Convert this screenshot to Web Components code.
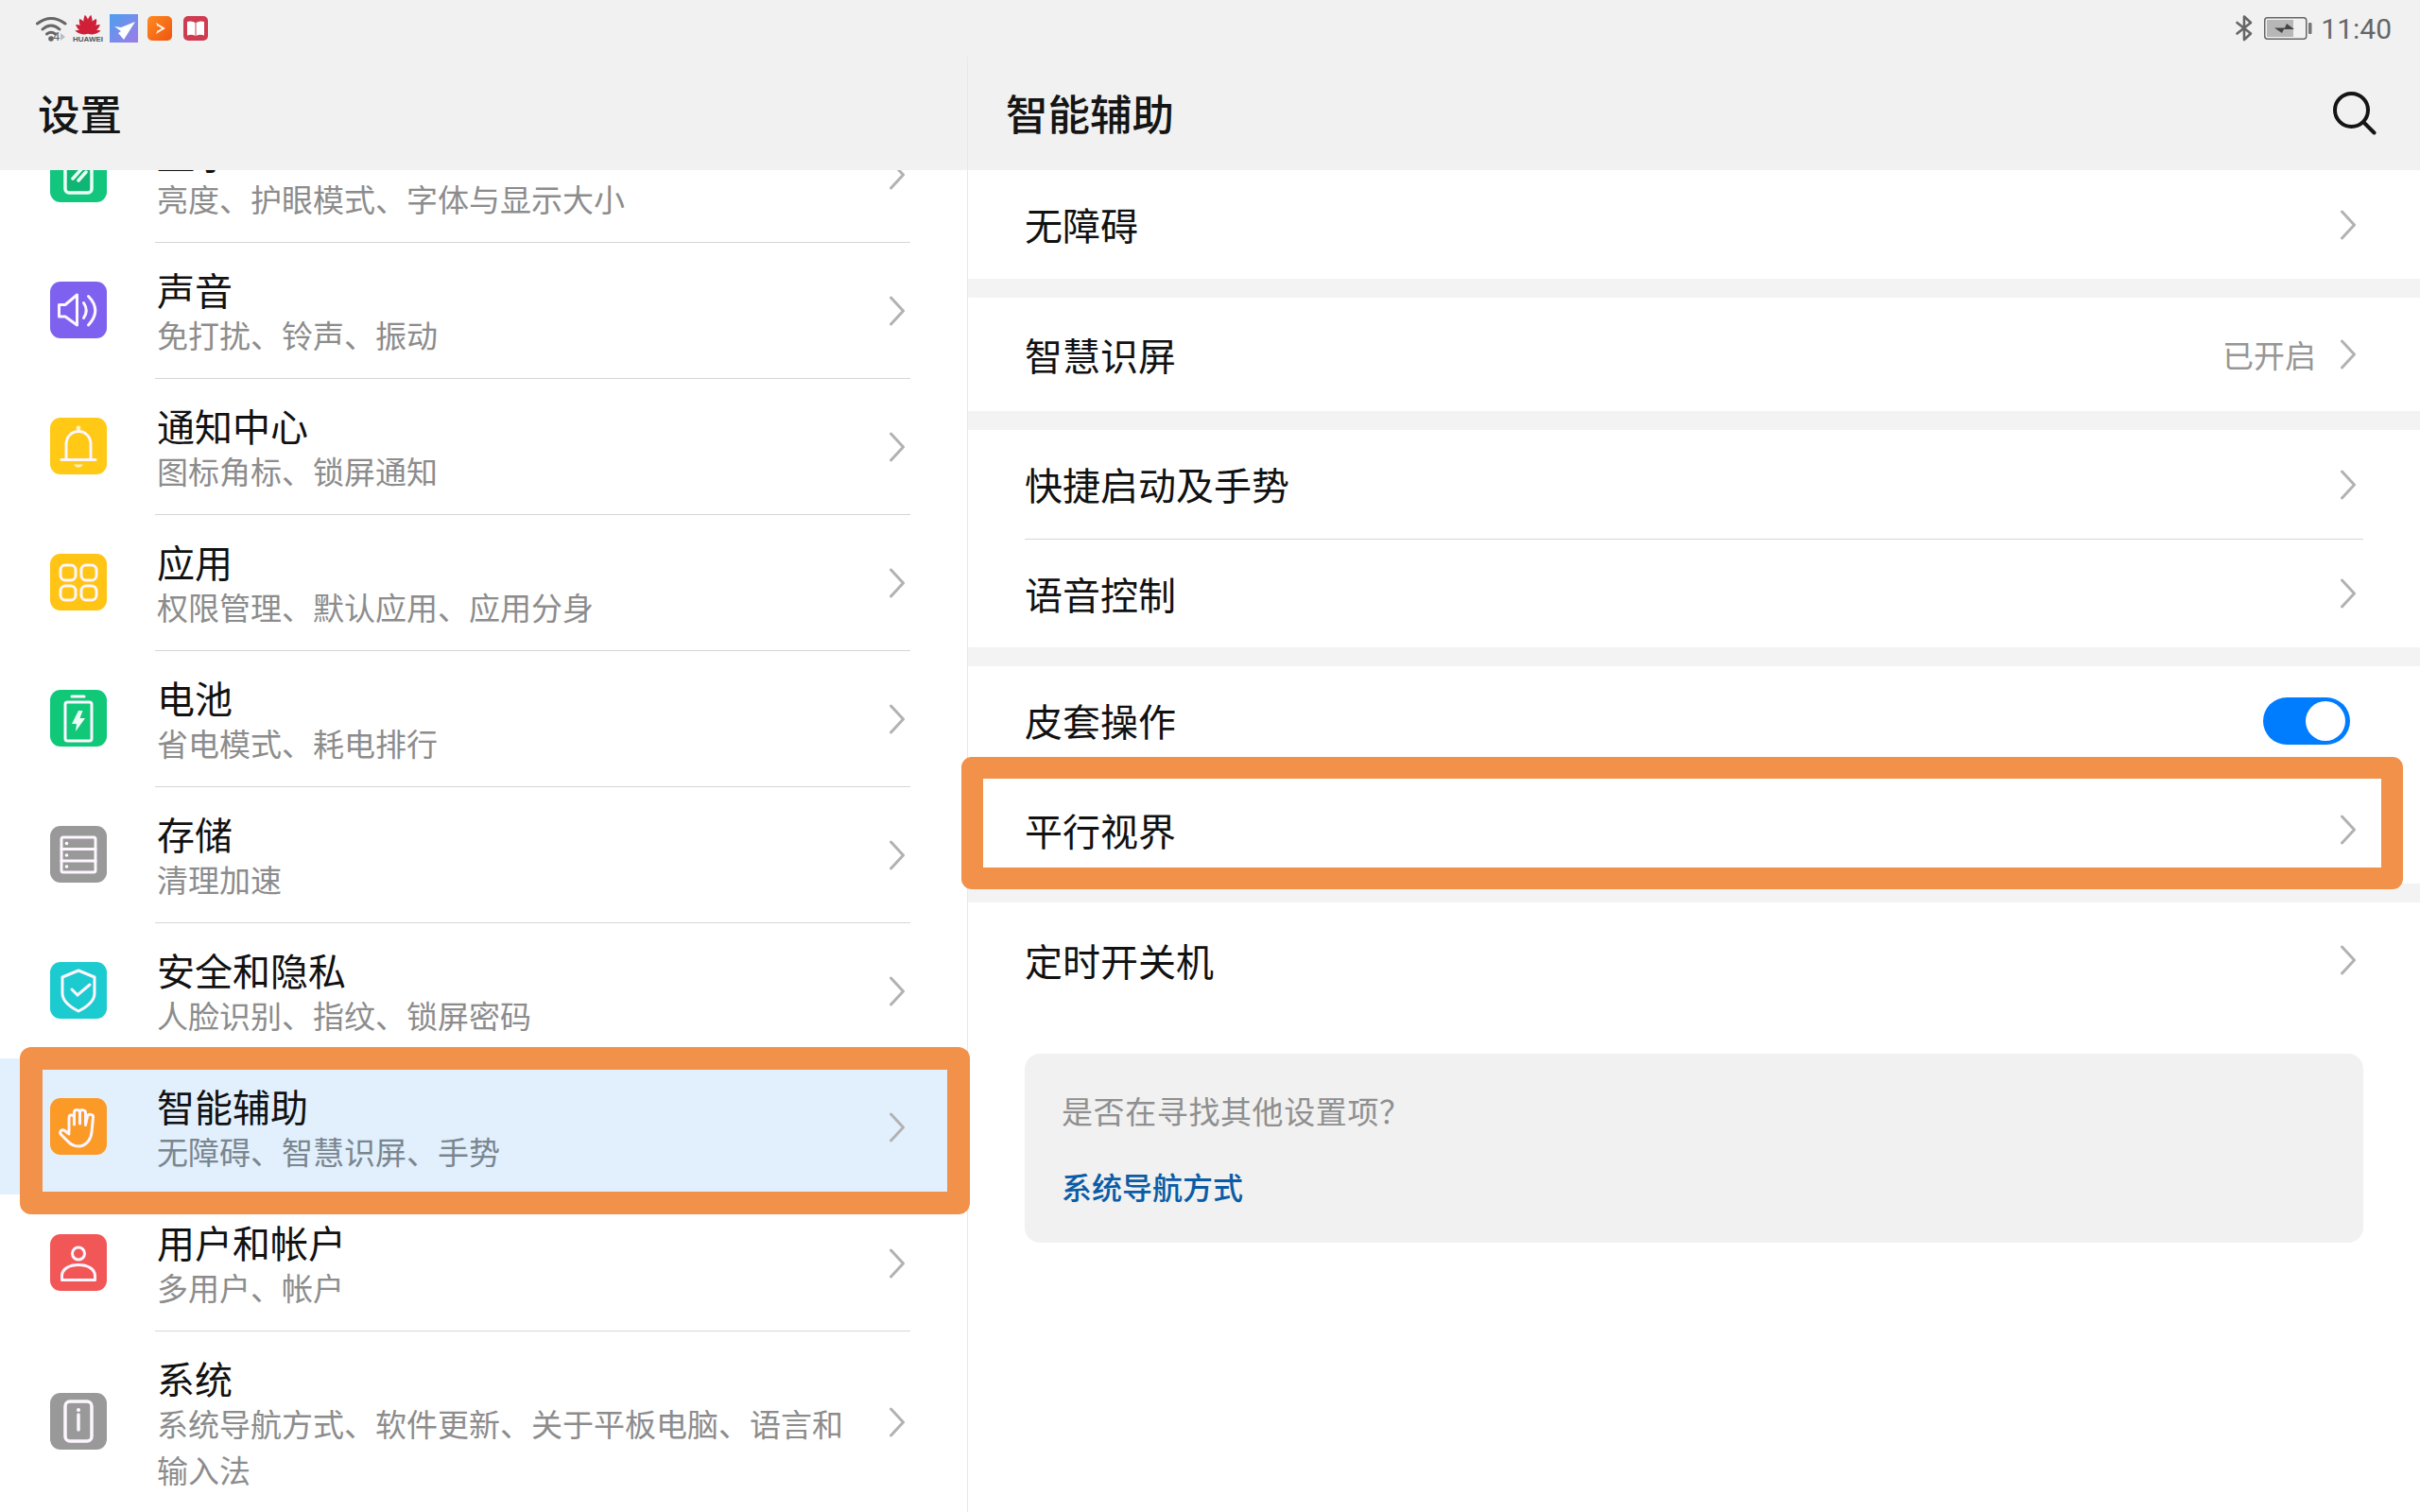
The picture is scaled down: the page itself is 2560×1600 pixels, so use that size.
<!DOCTYPE html>
<html lang="zh-CN">
<head>
<meta charset="utf-8">
<title>设置</title>
<style>
html,body{margin:0;padding:0;background:#fff;}
body{font-family:"Noto Sans CJK SC","Noto Sans",sans-serif;color:#111;}
</style>
</head>
<body>
<settings-app>
  <status-bar slot="status"></status-bar>

  <pane-header slot="left-head">设置</pane-header>
  <nav-row slot="left" first><app-icon slot="icon" name="display" color="#13c67e"></app-icon><span slot="title">显示</span><span slot="sub">亮度、护眼模式、字体与显示大小</span></nav-row>
  <nav-row slot="left"><app-icon slot="icon" name="sound" color="#7f61f0"></app-icon><span slot="title">声音</span><span slot="sub">免打扰、铃声、振动</span></nav-row>
  <nav-row slot="left"><app-icon slot="icon" name="bell" color="#ffc916"></app-icon><span slot="title">通知中心</span><span slot="sub">图标角标、锁屏通知</span></nav-row>
  <nav-row slot="left"><app-icon slot="icon" name="apps" color="#ffc414"></app-icon><span slot="title">应用</span><span slot="sub">权限管理、默认应用、应用分身</span></nav-row>
  <nav-row slot="left"><app-icon slot="icon" name="battery" color="#10c878"></app-icon><span slot="title">电池</span><span slot="sub">省电模式、耗电排行</span></nav-row>
  <nav-row slot="left"><app-icon slot="icon" name="storage" color="#999999"></app-icon><span slot="title">存储</span><span slot="sub">清理加速</span></nav-row>
  <nav-row slot="left"><app-icon slot="icon" name="shield" color="#1ccbd0"></app-icon><span slot="title">安全和隐私</span><span slot="sub">人脸识别、指纹、锁屏密码</span></nav-row>
  <nav-row slot="left" selected><app-icon slot="icon" name="hand" color="#fb9a27"></app-icon><span slot="title">智能辅助</span><span slot="sub">无障碍、智慧识屏、手势</span></nav-row>
  <nav-row slot="left"><app-icon slot="icon" name="user" color="#f25757"></app-icon><span slot="title">用户和帐户</span><span slot="sub">多用户、帐户</span></nav-row>
  <nav-row slot="left" tall><app-icon slot="icon" name="system" color="#999999"></app-icon><span slot="title">系统</span><span slot="sub">系统导航方式、软件更新、关于平板电脑、语言和输入法</span></nav-row>

  <pane-header slot="right-head" search>智能辅助</pane-header>
  <detail-group slot="right"><detail-row>无障碍</detail-row></detail-group>
  <detail-group slot="right"><detail-row tall value="已开启">智慧识屏</detail-row></detail-group>
  <detail-group slot="right"><detail-row>快捷启动及手势</detail-row><detail-row divided>语音控制</detail-row></detail-group>
  <detail-group slot="right"><detail-row toggle>皮套操作</detail-row><detail-row divided>平行视界</detail-row></detail-group>
  <detail-group slot="right" last>
    <detail-row lastrow>定时开关机</detail-row>
    <help-card><span slot="question">是否在寻找其他设置项？</span><span slot="link">系统导航方式</span></help-card>
  </detail-group>

  <call-out slot="overlay" style="left:21px;top:1108px;width:1005px;height:177px;"></call-out>
  <call-out slot="overlay" thin style="left:1017px;top:801px;width:1525px;height:140px;"></call-out>
</settings-app>

<script>
const ICONS = {
  display:`<rect x="16" y="9" width="28" height="41" rx="4" fill="#0fb573" stroke="#eafff5" stroke-width="3.5"/><path d="M24 35 34 24M30 37 38 28" stroke="#eafff5" stroke-width="3.5"/>`,
  sound:`<path d="M9.5 24.5H16L28.5 14V46L16 37H9.5Z" stroke-linejoin="round"/><path d="M35.5 22.5Q41 30.5 35.5 38.5"/><path d="M40.5 15.5Q55 30.5 40.5 46"/>`,
  bell:`<circle cx="30" cy="11" r="2.4" fill="#fff3c4" stroke="none"/><path d="M17 44V28C17 20 23 14.5 30 14.5S43 20 43 28V44"/><path d="M12 44.5H48"/><path d="M25 49.5H35L32 52.5H28Z" fill="#fff3c4" stroke="none"/>`,
  apps:`<rect x="11" y="12" width="16" height="16" rx="5"/><rect x="33" y="12" width="16" height="16" rx="5"/><rect x="11" y="34" width="16" height="15" rx="5"/><rect x="33" y="34" width="16" height="15" rx="5"/>`,
  battery:`<path d="M23 7H36"/><rect x="16" y="13" width="28" height="41" rx="2.5"/><path d="M30 22 23 36H28L27 44 37 30H31.5L34.5 22Z" fill="#ecfff6" stroke="none"/>`,
  storage:`<rect x="12" y="12" width="36" height="37" rx="2"/><path d="M12 24.5H48M12 37H48"/><g fill="#fff" stroke="none"><circle cx="17.5" cy="18.5" r="1.8"/><circle cx="17.5" cy="31" r="1.8"/><circle cx="17.5" cy="43" r="1.8"/></g>`,
  shield:`<path d="M30 9 13 16V33C13 42 22 48 30 52 38 48 47 42 47 33V16Z" stroke-linejoin="round"/><path d="M23 29 29 35 42 24"/>`,
  hand:`<path d="M20 36V20.5C20 17 25.5 17 25.5 20.5V28M25.5 28V15C25.5 11.5 31.5 11.5 31.5 15V27M31.5 27V15C31.5 11.5 37.5 12 37.5 15.5V28M37.5 28.5 39.5 19.5C40.5 16 46 17 45.5 20.5L44 36C43 45 37 51 30 51 25 51 21 48.5 18 45L11.5 38.5C9 36 12.5 32.5 15.5 34.5L20 38" stroke-linejoin="round"/>`,
  user:`<circle cx="30" cy="20.5" r="6.5"/><path d="M12.5 48.5H47.5V44C47.5 37 40 32.5 30 32.5S12.5 37 12.5 44Z" stroke-linejoin="round"/>`,
  system:`<rect x="16" y="9" width="28" height="42" rx="5" stroke-width="3.5"/><path d="M30 23V39" stroke-width="3.5"/><circle cx="30" cy="18" r="2" fill="#fff" stroke="none"/>`
};

function el(name, css, html, extra){
  const cls = class extends HTMLElement{
    connectedCallback(){
      if(this.shadowRoot) return;
      const r = this.attachShadow({mode:"open"});
      r.innerHTML = `<style>${css}</style>` + (typeof html === "function" ? html(this) : html);
      if(extra) extra(this, r);
    }
  };
  customElements.define(name, cls);
}

el("chevron-icon", `:host{display:block;width:18px;height:32px;flex:none;}svg{display:block;}`,
  `<svg width="18" height="32" viewBox="0 0 18 32" fill="none"><path d="M2.5 2 15.5 16 2.5 30" stroke="#b2b2b2" stroke-width="3" stroke-linecap="round" stroke-linejoin="round"/></svg>`);

el("app-icon", `:host{display:block;width:60px;height:60px;flex:none;}
  .b{width:60px;height:60px;border-radius:11px;}svg{display:block;}`,
  h=>`<div class="b" style="background:${h.getAttribute("color")}"><svg width="60" height="60" viewBox="0 0 60 60" fill="none" stroke="#fdf6ff" stroke-width="3" stroke-linecap="round">${ICONS[h.getAttribute("name")]}</svg></div>`);

el("status-bar", `:host{display:flex;align-items:center;justify-content:space-between;height:60px;background:#f1f1f1;padding:0 30px 0 38px;box-sizing:border-box;flex:none;}
  .side{display:flex;align-items:center;}
  svg{display:block;flex:none;}
  .t{font:400 30px Roboto,"Noto Sans",sans-serif;color:#666;margin-left:9px;line-height:60px;padding-top:2px;}
  .wifi{display:flex;align-items:flex-end;width:35px;height:30px;margin-top:2px;}
  .wifi svg{margin-right:-15px;}
  .wifi b{font:400 13px/15px Roboto,sans-serif;color:#666;width:7px;}
  .wifi i{display:block;width:0;height:0;border-left:5px solid #bbb;border-top:4px solid transparent;border-bottom:4px solid transparent;margin:0 0 3px 1px;}
  .hw{width:28px;display:flex;flex-direction:column;align-items:center;margin:0 9px 0 6px;}
  .hw span{font:700 8px/9px "Liberation Sans",sans-serif;color:#555;white-space:nowrap;}
`,`<div class="side">
  <div class="wifi"><svg width="33" height="30" viewBox="0 0 33 30" fill="none" stroke="#666" stroke-width="3" stroke-linecap="round"><path d="M1.500 9Q16-2 31 9"/><path d="M7 15Q16 7 25 15"/><path d="M11.500 20Q16 16.500 20.500 20"/><circle cx="16" cy="25" r="2.800" fill="#666" stroke="none"/></svg><b>4</b><i></i></div>
  <div class="hw"><svg width="28" height="22" viewBox="0 0 28 22" fill="#cf2038"><g transform="translate(14 20.500)"><path d="M0 0C-4.500-6-3.500-15 0-20 3.500-15 4.500-6 0 0Z" transform="rotate(-9)"/><path d="M0 0C-4.500-6-3.500-15 0-20 3.500-15 4.500-6 0 0Z" transform="rotate(9)"/><path d="M0 0C-4.500-6-3.500-14 0-18 3.500-14 4.500-6 0 0Z" transform="rotate(-30)"/><path d="M0 0C-4.500-6-3.500-14 0-18 3.500-14 4.500-6 0 0Z" transform="rotate(30)"/><path d="M0 0C-4-5-3-12 0-16 3-12 4-5 0 0Z" transform="rotate(-54)"/><path d="M0 0C-4-5-3-12 0-16 3-12 4-5 0 0Z" transform="rotate(54)"/><path d="M0 0C-3-4-2.500-10 0-14 2.500-10 3-4 0 0Z" transform="rotate(-78)"/><path d="M0 0C-3-4-2.500-10 0-14 2.500-10 3-4 0 0Z" transform="rotate(78)"/></g></svg><span>HUAWEI</span></div>
  <svg width="30" height="30" viewBox="0 0 30 30"><defs><linearGradient id="g" x1="0" y1="0" x2="1" y2="1"><stop offset="0" stop-color="#4a9ff0"/><stop offset="1" stop-color="#a07ce6"/></linearGradient></defs><rect width="30" height="30" fill="url(#g)"/><path d="M5 13 12 14 27 8 15 27 9 20 12 18Z" fill="#fff"/></svg>
  <svg width="26" height="26" viewBox="0 0 26 26" style="margin-left:10px"><defs><linearGradient id="o" x1="0" y1="0" x2="1" y2="1"><stop offset="0" stop-color="#ff8a22"/><stop offset="1" stop-color="#ef5510"/></linearGradient></defs><rect width="26" height="26" rx="5" fill="url(#o)"/><path d="M9 7 19 13 9 19 11.500 13Z" fill="#fff2e0"/><path d="M11 10.500 15 13 11 15.500Z" fill="#f06a18"/></svg>
  <svg width="26" height="26" viewBox="0 0 26 26" style="margin-left:12px"><rect width="26" height="26" rx="5" fill="#cf3b50"/><path d="M4 6Q9 4.500 12.500 7V21Q9 19 4 20.500ZM13.500 7Q17 4.500 22 6V20.500Q17 19 13.500 21Z" fill="#fff"/></svg>
</div>
<div class="side">
  <svg width="20" height="30" viewBox="0 0 20 30" fill="none" stroke="#666" stroke-width="2.600" stroke-linecap="round" stroke-linejoin="round"><path d="M2.500 9 17 20.500 10 27V2.500L17 9 2.500 20.500"/></svg>
  <svg width="51" height="24" viewBox="0 0 51 24" fill="none" style="margin-left:11px"><rect x=".75" y=".75" width="44" height="22.500" rx="3" stroke="#666" stroke-width="1.500"/><rect x="3" y="3" width="28" height="18" fill="#b7b7b7"/><rect x="47" y="6" width="3.500" height="12" rx="1" fill="#777"/><path d="M11 11.500H22L24 7 32 13H21L19 17Z" fill="#444"/></svg>
  <span class="t">11:40</span>
</div>`);

el("pane-header", `:host{display:flex;align-items:center;justify-content:space-between;height:120px;flex:none;background:#f1f1f1;padding:0 46px 0 40px;box-sizing:border-box;font-size:44.5px;font-weight:500;color:#151515;line-height:60px;}
  .l{padding-bottom:3px;}
  svg{display:block;}`,
  h=>`<span class="l"><slot></slot></span>` + (h.hasAttribute("search") ? `<svg width="48" height="48" viewBox="0 0 48 48" fill="none" stroke="#151515" stroke-width="4" stroke-linecap="round"><circle cx="21.500" cy="20.500" r="17.500"/><path d="M34.500 33.500 45.500 44.500"/></svg>` : ``));

el("nav-row", `:host{display:flex;height:144px;flex:none;padding-left:53px;box-sizing:border-box;}
  :host([first]){margin-top:-68px;}
  :host([tall]){height:192px;}
  :host([selected]){background:#e2f0fd;}
  .ic{display:flex;align-items:center;margin-right:51px;}
  .body{flex:1;min-width:0;margin-right:60px;border-top:1px solid #d6d6d6;display:flex;align-items:center;justify-content:space-between;padding-right:5px;box-sizing:border-box;}
  :host([selected]) .body{border-top-color:transparent;}
  .text{width:740px;align-self:flex-start;padding:25px 0 0 2px;}
  .title{font-size:40px;line-height:48px;color:#111;}
  .sub{font-size:33px;line-height:49px;color:#8c8c8c;}
  :host([selected]) .sub{color:#7a8690;}`,
  `<div class="ic"><slot name="icon"></slot></div><div class="body"><div class="text"><div class="title"><slot name="title"></slot></div><div class="sub"><slot name="sub"></slot></div></div><chevron-icon></chevron-icon></div>`);

el("detail-group", `:host{display:block;background:#fff;margin-bottom:20px;flex:none;}
  :host([last]){margin-bottom:0;flex:1;}`, `<slot></slot>`);

el("detail-row", `:host{display:block;padding:0 60px;height:115px;box-sizing:border-box;}
  :host([tall]){height:120px;}
  :host([lastrow]){height:122px;}
  .in{height:100%;display:flex;align-items:center;padding-right:7px;box-sizing:border-box;font-size:40px;color:#111;}
  :host([divided]) .in{border-top:1px solid #d6d6d6;}
  .lab{flex:1;padding-bottom:1px;}
  .val{font-size:33px;color:#969696;margin-right:25px;}`,
  h=>`<div class="in"><span class="lab"><slot></slot></span>` +
    (h.hasAttribute("value") ? `<span class="val">${h.getAttribute("value")}</span>` : ``) +
    (h.hasAttribute("toggle") ? `<toggle-switch></toggle-switch>` : `<chevron-icon></chevron-icon>`) + `</div>`);

el("toggle-switch", `:host{width:92px;height:50px;border-radius:25px;background:#007dff;margin-right:7px;padding:4px 5px 4px 0;box-sizing:border-box;display:flex;justify-content:flex-end;flex:none;}
  i{display:block;width:42px;height:42px;border-radius:50%;background:#fff;}`, `<i></i>`);

el("help-card", `:host{display:block;margin:38px 60px 0;height:200px;border-radius:16px;background:#f1f1f1;padding:36px 39px 0;box-sizing:border-box;}
  .q{font-size:33px;line-height:48px;color:#8f8f8f;letter-spacing:.6px;}
  .l{font-size:32px;line-height:48px;color:#0b5ca6;font-weight:500;margin-top:32px;}`,
  `<div class="q"><slot name="question"></slot></div><div class="l"><slot name="link"></slot></div>`);

el("call-out", `:host{position:absolute;display:block;box-sizing:border-box;border:24px solid #f2914a;border-radius:12px;pointer-events:none;}
  :host([thin]){border-width:23px;border-radius:11px;}`, ``);

el("settings-app", `:host{display:flex;flex-direction:column;position:relative;width:2560px;height:1600px;overflow:hidden;background:#fff;}
  .panes{flex:1;display:flex;min-height:0;}
  .left{width:1024px;flex:none;display:flex;flex-direction:column;min-height:0;border-right:1px solid #e8e8e8;box-sizing:border-box;}
  .right{flex:1;min-width:0;display:flex;flex-direction:column;}
  .list{flex:1;min-height:0;overflow:hidden;display:flex;flex-direction:column;background:#fff;}
  .detail{flex:1;min-height:0;display:flex;flex-direction:column;background:#f3f3f3;}`,
  `<slot name="status"></slot>
  <div class="panes">
    <div class="left"><slot name="left-head"></slot><div class="list"><slot name="left"></slot></div></div>
    <div class="right"><slot name="right-head"></slot><div class="detail"><slot name="right"></slot></div></div>
  </div>
  <slot name="overlay"></slot>`);
</script>
</body>
</html>
